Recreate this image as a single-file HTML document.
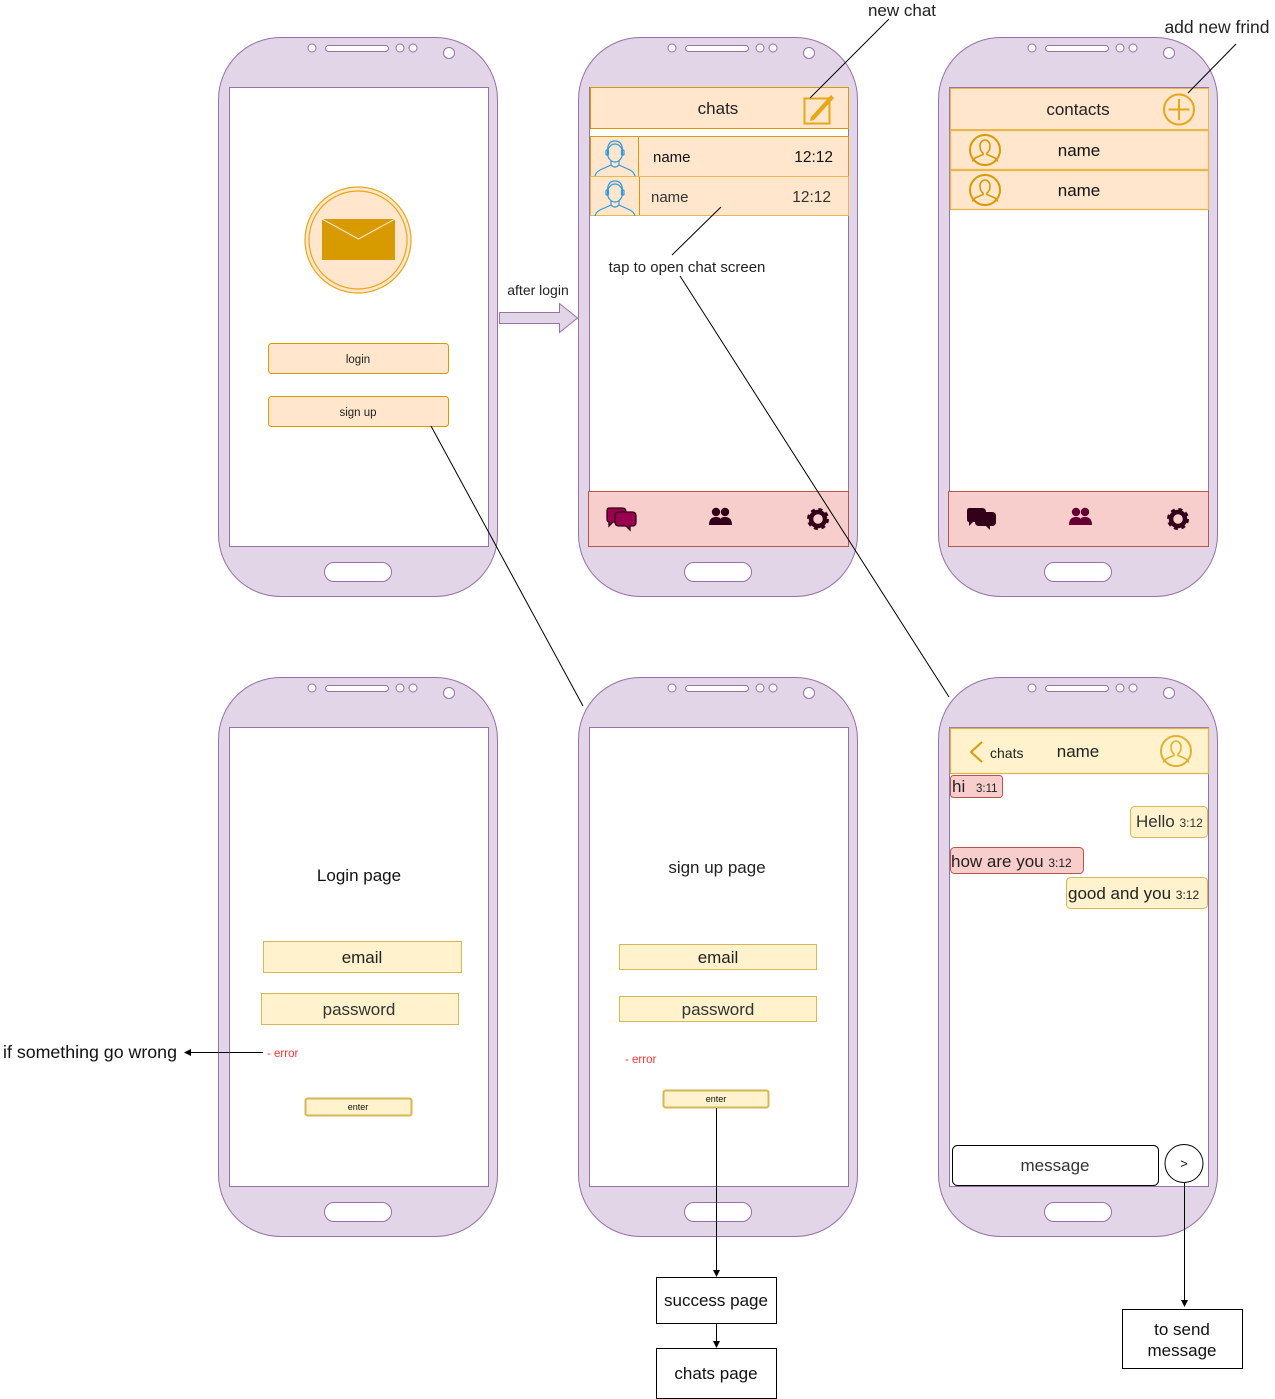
<!DOCTYPE html>
<html><head><meta charset="utf-8"><style>
html,body{margin:0;padding:0;background:#fff;}
svg{display:block;font-family:"Liberation Sans",Arial,sans-serif;}
</style></head><body>
<svg width="1275" height="1399" viewBox="0 0 1275 1399" xmlns="http://www.w3.org/2000/svg">
<defs>
<g id="phone">
  <rect x="0.5" y="0.5" width="279" height="559" rx="62" ry="62" fill="#e1d5e7" stroke="#9673a6"/>
  <rect x="11.5" y="50.5" width="259" height="459" fill="#fff" stroke="#9673a6"/>
  <circle cx="94" cy="11" r="4" fill="#fff" stroke="#9673a6"/>
  <rect x="107.5" y="8.5" width="63" height="6" rx="3" fill="#fff" stroke="#9673a6"/>
  <circle cx="182" cy="11" r="4" fill="#fff" stroke="#9673a6"/>
  <circle cx="195" cy="11" r="4" fill="#fff" stroke="#9673a6"/>
  <circle cx="231" cy="16" r="5.5" fill="#fff" stroke="#9673a6"/>
  <rect x="106.5" y="525.5" width="67" height="19" rx="9.5" fill="#fff" stroke="#9673a6"/>
</g>
<g id="avatar">
  <g fill="none" stroke="#3399dd" stroke-width="1.2">
    <ellipse cx="24" cy="16" rx="7.5" ry="9"/>
    <path d="M16.5 14 q0 -10 7.5 -10 q7.5 0 7.5 10"/>
    <rect x="15" y="13" width="2.5" height="5" rx="1"/>
    <rect x="30.5" y="13" width="2.5" height="5" rx="1"/>
    <path d="M20 24 v4 l-11 5 q-4 2 -5 6 M28 24 v4 l11 5 q4 2 5 6"/>
    <path d="M20 28 q4 4 8 0"/>
  </g>
</g>
<g id="user">
  <circle cx="0" cy="0" r="15" fill="none" stroke="#d79b00" stroke-width="2"/>
  <path d="M-5 -4 a5 6 0 1 1 10 0 q0 5 -3 7 v1.5 l7 3 q3 1.5 3.5 4 M-5 -4 q0 5 3 7 v1.5 l-7 3 q-3 1.5 -3.5 4" fill="none" stroke="#d79b00" stroke-width="1.6"/>
</g>
<g id="gear">
  <circle r="8" fill="none" stroke="#33001a" stroke-width="6" stroke-dasharray="3.3 3"/>
  <circle r="7" fill="none" stroke="#33001a" stroke-width="4.5"/>
</g>
</defs>

<use href="#phone" x="218" y="37"/>
<use href="#phone" x="578" y="37"/>
<use href="#phone" x="938" y="37"/>
<use href="#phone" x="218" y="677"/>
<use href="#phone" x="578" y="677"/>
<use href="#phone" x="938" y="677"/>

<!-- Phone 1 -->
<circle cx="358" cy="240" r="53" fill="#ffe6cc" stroke="#e6a817" stroke-width="1.2"/>
<circle cx="358" cy="240" r="49" fill="none" stroke="#e6a817" stroke-width="1.2"/>
<rect x="322" y="219" width="73" height="41" fill="#d79b00"/>
<path d="M322 219 L358.5 239 L395 219" fill="none" stroke="#ffe6cc" stroke-width="1"/>
<rect x="268.5" y="343.5" width="180" height="30" rx="3" fill="#ffe6cc" stroke="#d79b00"/>
<text x="358" y="363" font-size="11.5" text-anchor="middle" fill="#222">login</text>
<rect x="268.5" y="396.5" width="180" height="30" rx="3" fill="#ffe6cc" stroke="#d79b00"/>
<text x="358" y="416" font-size="11.5" text-anchor="middle" fill="#222">sign up</text>

<text x="538" y="295" font-size="14" text-anchor="middle" fill="#222">after login</text>
<path d="M499.5 312.5 H559.5 V303.5 L577.5 318 L559.5 332.5 V323.5 H499.5 Z" fill="#e1d5e7" stroke="#9673a6"/>

<!-- Phone 2 chats -->
<rect x="590.5" y="87.5" width="258" height="41" fill="#ffe6cc" stroke="#d79b00"/>
<text x="718" y="114" font-size="17" text-anchor="middle" fill="#222">chats</text>
<rect x="804.5" y="98.5" width="25" height="25" fill="none" stroke="#e6a817" stroke-width="2"/>
<path d="M811 117 L831 95 L834 98 L814 120 L810 121 Z" fill="#e6a817"/>
<rect x="590.5" y="136.5" width="258" height="40" fill="#ffe6cc" stroke="#d79b00"/>
<rect x="590.5" y="176.5" width="258" height="39" fill="#ffe6cc" stroke="#e8b84a"/>
<line x1="638.5" y1="136" x2="638.5" y2="176" stroke="#d79b00"/>
<line x1="639.5" y1="177" x2="639.5" y2="215" stroke="#d79b00"/>
<use href="#avatar" x="591" y="137"/>
<use href="#avatar" x="591" y="177"/>
<text x="653" y="162" font-size="15" fill="#111">name</text>
<text x="833" y="162" font-size="15.5" fill="#111" text-anchor="end">12:12</text>
<text x="651" y="202" font-size="15" fill="#333">name</text>
<text x="831" y="202" font-size="15.5" fill="#333" text-anchor="end">12:12</text>
<text x="687" y="272" font-size="15" text-anchor="middle" fill="#222">tap to open chat screen</text>
<line x1="721" y1="207" x2="672" y2="255" stroke="#000"/>
<line x1="889" y1="19" x2="810" y2="98" stroke="#000"/>
<text x="902" y="16" font-size="17" text-anchor="middle" fill="#222">new chat</text>
<g transform="translate(588,491)">
  <rect x="0.5" y="0.5" width="260" height="55" fill="#f8cecc" stroke="#b85450"/>
  <path d="M21 17 h13 q4 0 4 4 v6 q0 4 -4 4 h-9 l-4 4 v-4 q-2 0 -2 -3 v-8 q0 -3 2 -3z" fill="#99004d" stroke="#33001a" stroke-width="1.3"/>
  <path d="M31 21 h13 q4 0 4 4 v6 q0 4 -4 4 h-2 v4 l-4 -4 h-7 q-4 0 -4 -4 v-6 q0 -4 4 -4z" fill="#99004d" stroke="#33001a" stroke-width="1.3"/>
  <g transform="translate(123,17)" fill="#33001a">
    <circle cx="5" cy="4" r="4.2"/><circle cx="14" cy="4" r="4.2"/>
    <path d="M-2 17 q0 -8 7 -8 q4 0 4.5 2 q0.5 -2 4.5 -2 q7 0 7 8 z"/>
  </g>
  <use href="#gear" x="230" y="28"/>
</g>

<!-- Phone 3 contacts -->
<rect x="950.5" y="88.5" width="258" height="41" fill="#ffe6cc" stroke="#e8b84a"/>
<text x="1078" y="115" font-size="17" text-anchor="middle" fill="#222">contacts</text>
<circle cx="1179" cy="109.5" r="15" fill="none" stroke="#e6a817" stroke-width="2"/>
<path d="M1179 99 v21 M1168.5 109.5 h21" stroke="#e6a817" stroke-width="2"/>
<rect x="950.5" y="130.5" width="258" height="39" fill="#ffe6cc" stroke="#e8b84a" stroke-width="1.3"/>
<rect x="950.5" y="170.5" width="258" height="39" fill="#ffe6cc" stroke="#e8b84a" stroke-width="1.3"/>
<use href="#user" x="985" y="150"/>
<use href="#user" x="985" y="190"/>
<text x="1079" y="156" font-size="17" text-anchor="middle" fill="#111">name</text>
<text x="1079" y="196" font-size="17" text-anchor="middle" fill="#111">name</text>
<line x1="1236" y1="44" x2="1188" y2="93" stroke="#000"/>
<text x="1217" y="33" font-size="17.5" text-anchor="middle" fill="#222">add new frind</text>
<g transform="translate(948,491)">
  <rect x="0.5" y="0.5" width="260" height="55" fill="#f8cecc" stroke="#b85450"/>
  <g fill="#33001a">
    <path d="M21 17 h13 q4 0 4 4 v6 q0 4 -4 4 h-9 l-4 4 v-4 q-2 0 -2 -3 v-8 q0 -3 2 -3z"/>
    <path d="M31 21 h13 q4 0 4 4 v6 q0 4 -4 4 h-2 v4 l-4 -4 h-7 q-4 0 -4 -4 v-6 q0 -4 4 -4z"/>
  </g>
  <g transform="translate(123,17)" fill="#660033">
    <circle cx="5" cy="4" r="4.2"/><circle cx="14" cy="4" r="4.2"/>
    <path d="M-2 17 q0 -8 7 -8 q4 0 4.5 2 q0.5 -2 4.5 -2 q7 0 7 8 z"/>
  </g>
  <use href="#gear" x="230" y="28"/>
</g>

<!-- Phone 4 login page -->
<text x="359" y="881" font-size="17" text-anchor="middle" fill="#111">Login page</text>
<rect x="263.5" y="941.5" width="198" height="31" fill="#fff2cc" stroke="#d6b656"/>
<text x="362" y="963" font-size="17" text-anchor="middle" fill="#222">email</text>
<rect x="261.5" y="993.5" width="197" height="31" fill="#fff2cc" stroke="#d6b656"/>
<text x="359" y="1015" font-size="17" text-anchor="middle" fill="#333">password</text>
<text x="267" y="1057" font-size="11.5" fill="#ff3333">- error</text>
<rect x="305.5" y="1098.5" width="106" height="17" rx="2" fill="#fff2cc" stroke="#d6b656" stroke-width="2"/>
<text x="358" y="1110" font-size="9" text-anchor="middle" fill="#111">enter</text>
<line x1="263" y1="1052.5" x2="190" y2="1052.5" stroke="#000"/>
<path d="M184 1052.5 l7 -3.5 v7 z" fill="#000"/>
<text x="3" y="1058" font-size="17.8" fill="#111">if something go wrong</text>

<!-- Phone 5 signup -->
<text x="717" y="873" font-size="17" text-anchor="middle" fill="#222">sign up page</text>
<rect x="619.5" y="944.5" width="197" height="25" fill="#fff2cc" stroke="#d6b656"/>
<text x="718" y="963" font-size="17" text-anchor="middle" fill="#222">email</text>
<rect x="619.5" y="996.5" width="197" height="25" fill="#fff2cc" stroke="#d6b656"/>
<text x="718" y="1015" font-size="17" text-anchor="middle" fill="#333">password</text>
<text x="625" y="1063" font-size="11.5" fill="#ff3333">- error</text>
<rect x="663.5" y="1090.5" width="105" height="17" rx="2" fill="#fff2cc" stroke="#d6b656" stroke-width="2"/>
<text x="716" y="1102" font-size="9" text-anchor="middle" fill="#111">enter</text>
<line x1="716.5" y1="1108" x2="716.5" y2="1271" stroke="#000"/>
<path d="M716.5 1277 l-3.5 -7 h7 z" fill="#000"/>
<line x1="431" y1="426" x2="583" y2="706" stroke="#000"/>
<rect x="656.5" y="1277.5" width="120" height="46" fill="#fff" stroke="#000"/>
<text x="716" y="1306" font-size="17" text-anchor="middle" fill="#111">success page</text>
<line x1="716.5" y1="1324" x2="716.5" y2="1342" stroke="#000"/>
<path d="M716.5 1348 l-3.5 -7 h7 z" fill="#000"/>
<rect x="656.5" y="1348.5" width="120" height="50" fill="#fff" stroke="#000"/>
<text x="716" y="1379" font-size="17" text-anchor="middle" fill="#111">chats page</text>

<!-- Phone 6 chat -->
<rect x="950.5" y="728.5" width="258" height="45" fill="#fff2cc" stroke="#d6b656" stroke-width="1.3"/>
<path d="M982 742 L971 752 L982 762" fill="none" stroke="#d79b00" stroke-width="2"/>
<text x="990" y="758" font-size="14" fill="#222">chats</text>
<text x="1078" y="757" font-size="17" text-anchor="middle" fill="#222">name</text>
<g transform="translate(1176,751)" opacity="0.75"><use href="#user"/></g>
<rect x="950.5" y="775.5" width="52" height="22" rx="3" fill="#f8cecc" stroke="#b85450"/>
<text x="952" y="792" font-size="17" fill="#222">hi</text>
<text x="976" y="792" font-size="11.5" fill="#222">3:11</text>
<rect x="1130.5" y="806.5" width="77" height="31" rx="4" fill="#fff2cc" stroke="#d6b656"/>
<text x="1136" y="827" font-size="17" fill="#333">Hello <tspan font-size="12">3:12</tspan></text>
<rect x="950.5" y="847.5" width="133" height="26" rx="4" fill="#f8cecc" stroke="#b85450"/>
<text x="951" y="867" font-size="17" fill="#222">how are you <tspan font-size="12">3:12</tspan></text>
<rect x="1066.5" y="877.5" width="141" height="31" rx="4" fill="#fff2cc" stroke="#d6b656"/>
<text x="1068" y="899" font-size="17" fill="#222">good and you <tspan font-size="12">3:12</tspan></text>
<rect x="952.5" y="1145.5" width="206" height="40" rx="5" fill="#fff" stroke="#000"/>
<text x="1055" y="1171" font-size="17" text-anchor="middle" fill="#333">message</text>
<circle cx="1184" cy="1163.5" r="19" fill="#fff" stroke="#000"/>
<text x="1184" y="1168" font-size="13" text-anchor="middle" fill="#111">&gt;</text>
<line x1="1184.5" y1="1183" x2="1184.5" y2="1301" stroke="#000"/>
<path d="M1184.5 1307 l-3.5 -7 h7 z" fill="#000"/>
<rect x="1122.5" y="1309.5" width="120" height="59" fill="#fff" stroke="#000"/>
<text x="1182" y="1335" font-size="17" text-anchor="middle" fill="#111">to send</text>
<text x="1182" y="1356" font-size="17" text-anchor="middle" fill="#111">message</text>

<!-- long connector on top -->
<line x1="680" y1="276" x2="949" y2="697" stroke="#000"/>
</svg>
</body></html>
